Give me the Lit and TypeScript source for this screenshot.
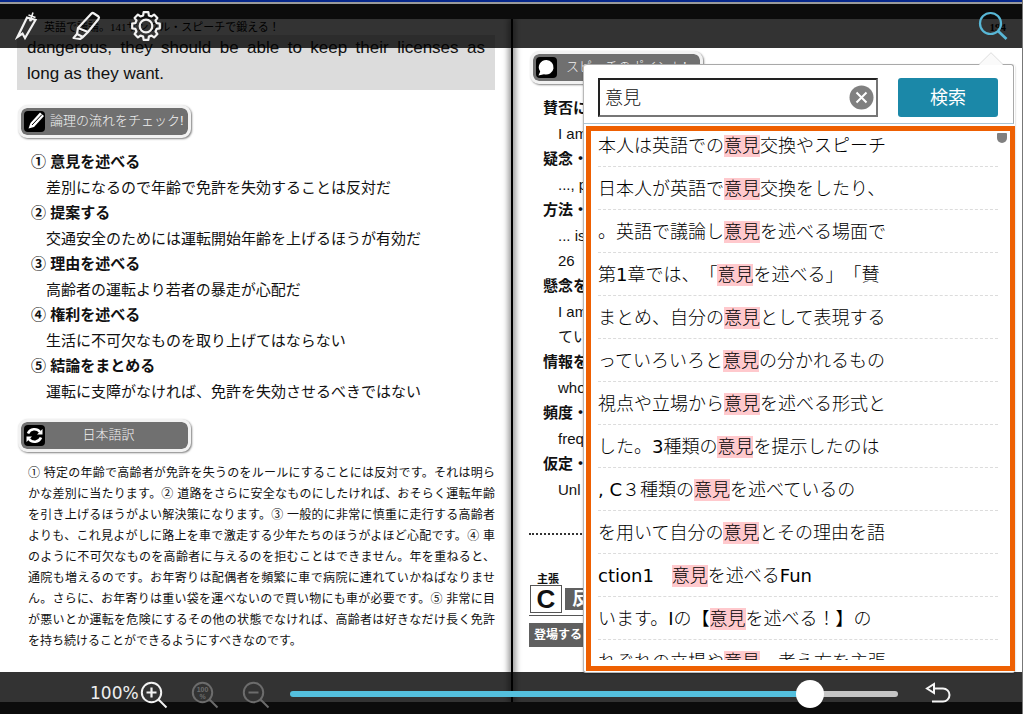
import { LitElement, html, css, svg } from "lit";
import { customElement, state } from "lit/decorators.js";
import { styleMap } from "lit/directives/style-map.js";

type Hit = [before: string, after: string];

const KEYWORD = "意見";

const HITS: Hit[] = [
  ["本人は英語での", "交換やスピーチ"],
  ["日本人が英語で", "交換をしたり、"],
  ["。英語で議論し", "を述べる場面で"],
  ["第1章では、「", "を述べる」「賛"],
  ["まとめ、自分の", "として表現する"],
  ["っていろいろと", "の分かれるもの"],
  ["視点や立場から", "を述べる形式と"],
  ["した。3種類の", "を提示したのは"],
  [", C３種類の", "を述べているの"],
  ["を用いて自分の", "とその理由を語"],
  ["ction1　", "を述べるFun"],
  ["います。Iの【", "を述べる！】の"],
  ["れぞれの立場や", "、考え方を主張"],
];

const FLOW: [string, string][] = [
  ["① 意見を述べる", "差別になるので年齢で免許を失効することは反対だ"],
  ["② 提案する", "交通安全のためには運転開始年齢を上げるほうが有効だ"],
  ["③ 理由を述べる", "高齢者の運転より若者の暴走が心配だ"],
  ["④ 権利を述べる", "生活に不可欠なものを取り上げてはならない"],
  ["⑤ 結論をまとめる", "運転に支障がなければ、免許を失効させるべきではない"],
];

const TRANSLATION = [
  "① 特定の年齢で高齢者が免許を失うのをルールにすることには反対です。それは明ら",
  "かな差別に当たります。② 道路をさらに安全なものにしたければ、おそらく運転年齢",
  "を引き上げるほうがよい解決策になります。③ 一般的に非常に慎重に走行する高齢者",
  "よりも、これ見よがしに路上を車で激走する少年たちのほうがよほど心配です。④ 車",
  "のように不可欠なものを高齢者に与えるのを拒むことはできません。年を重ねると、",
  "通院も増えるのです。お年寄りは配偶者を頻繁に車で病院に連れていかねばなりませ",
  "ん。さらに、お年寄りは重い袋を運べないので買い物にも車が必要です。⑤ 非常に目",
  "が悪いとか運転を危険にするその他の状態でなければ、高齢者は好きなだけ長く免許",
  "を持ち続けることができるようにすべきなのです。",
];

const POINTS: [string, string[]][] = [
  ["賛否に", ["I am"]],
  ["疑念・", ["..., p"]],
  ["方法・", ["... is", "26"]],
  ["懸念を", ["I am", "てい"]],
  ["情報を", ["who"]],
  ["頻度・", ["freq"]],
  ["仮定・", ["Unl"]],
];

const gearPath = (() => {
  const teeth = 8;
  const pts: string[] = [];
  for (let i = 0; i < teeth; i++) {
    const a = (i * 2 * Math.PI) / teeth - Math.PI / 2;
    const steps: [number, number][] = [
      [-0.26, 11], [-0.17, 14], [0.17, 14], [0.26, 11],
    ];
    for (const [d, r] of steps) {
      pts.push(`${(15 + r * Math.cos(a + d)).toFixed(2)} ${(15 + r * Math.sin(a + d)).toFixed(2)}`);
    }
  }
  return `M${pts.join("L")}Z`;
})();

const bookmarkIcon = html`<svg width="26" height="30" viewBox="0 0 26 30" fill="none" stroke="#f2f2f2" stroke-width="2.200">
  <path d="M12 6.500L20.500 9L10 27L7.500 22.500L2.500 26Z" />
  <path d="M18 1.500L15.500 9M13.500 4L20.500 6.500" stroke-width="1.600" />
  <circle cx="15.500" cy="9" r="1.500" fill="#f2f2f2" stroke="none" />
</svg>`;

const penIcon = html`<svg width="30" height="30" viewBox="0 0 30 30" fill="none" stroke="#f2f2f2" stroke-width="2.200" stroke-linejoin="round">
  <path d="M20.500 2.500Q21.500 1.500 23 2.500L27.500 5.500Q28.500 6.500 27.500 8L17 21L7 17Z" />
  <path d="M7 17L6 23L12 26L17 21M6 23L2.500 27L9 28L12 26" />
</svg>`;

const gearIcon = html`<svg width="30" height="30" viewBox="0 0 30 30" fill="none" stroke="#f2f2f2" stroke-width="2.200" stroke-linejoin="round">
  <path d=${gearPath} /><circle cx="15" cy="15" r="6.300" />
</svg>`;

const searchIcon = html`<svg width="30" height="30" viewBox="0 0 30 30" fill="none" stroke="#58b7d6" stroke-width="2.200">
  <circle cx="12.500" cy="12.500" r="10.500" /><path d="M20 20L28.500 28" stroke-width="2.800" />
</svg>`;

const lens = (inner: unknown, color: string) => html`<svg width="28" height="28" viewBox="0 0 28 28" fill="none" stroke=${color} stroke-width="2">
  <circle cx="11.500" cy="11.500" r="9.700" /><path d="M18.500 18.500L26.500 26.500" />${inner}
</svg>`;

const plus = svg`<path d="M6.500 11.500H16.500M11.500 6.500V16.500" stroke-width="2.200" />`;
const minus = svg`<path d="M6.500 11.500H16.500" />`;
const full = svg`<g fill="#6c6c6c" stroke="none" font-family="Liberation Sans, sans-serif" font-weight="700" font-size="7" text-anchor="middle"><text x="11.500" y="11">100</text><text x="11.500" y="18">%</text></g>`;

const backIcon = html`<svg width="26" height="22" viewBox="0 0 26 22" fill="none" stroke="#f5f5f5" stroke-width="2">
  <path d="M9 2V11L2 6.500Z" /><path d="M9 6.500H18A6.500 6.500 0 0 1 18 19.500H7" />
</svg>`;

const pencilMark = html`<svg width="21" height="21" viewBox="0 0 21 21">
  <rect width="21" height="21" rx="4" fill="#000" />
  <path d="M4.500 17.500L6.500 12L16 1.500L20 5L10 16Z" fill="#fff" />
  <path d="M8 14L18 3.500" stroke="#000" stroke-width="1" />
</svg>`;

const cycleMark = html`<svg width="21" height="21" viewBox="0 0 21 21" fill="none" stroke="#fff" stroke-width="2.600">
  <rect width="21" height="21" rx="4" fill="#000" stroke="none" />
  <path d="M4 8.500A7 7 0 0 1 16 7" /><path d="M17 12.500A7 7 0 0 1 5 14" />
  <path d="M18.500 4V9.500H13Z M2.500 17V11.500H8Z" fill="#fff" stroke="none" />
</svg>`;

const balloonMark = html`<svg width="21" height="21" viewBox="0 0 21 21">
  <rect width="21" height="21" rx="4" fill="#000" />
  <path d="M10.500 3A7.500 7.300 0 1 1 8 17.300L2.500 18.500L4.200 14.500A7.500 7.300 0 0 1 10.500 3Z" fill="#fff" />
</svg>`;

/** Wraps Latin letters and digits so that they keep the regular weight beside light kana and kanji. */
const mixed = (text: string) =>
  text.split(/([\x21-\x7e][\x20-\x7e]*)/).filter(Boolean).map((part) =>
    /^[\x21-\x7e]/.test(part) ? html`<span class="latin">${part}</span>` : part);

@customElement("app-root")
export class AppRoot extends LitElement {
  @state() private query = KEYWORD;
  @state() private position = 872;

  static styles = css`
    :host {
      display: flex;
      flex-direction: column;
      height: 100vh;
      box-sizing: border-box;
      border-right: 1px solid #777;
      overflow: hidden;
      background: #3c3c3c;
      color: #111;
      font-family: "Liberation Sans", "Noto Sans CJK JP", sans-serif;
      text-spacing-trim: space-all;
    }
    * { box-sizing: border-box; }
    svg { display: block; flex: none; }
    button { border: 0; padding: 0; background: none; font: inherit; cursor: pointer; }
    ul, ol, p, dl, dd, h2 { margin: 0; padding: 0; list-style: none; font-weight: 400; }

    .strip { flex: none; height: 4px; background: #06278a; border-bottom: 2px solid #9a9a9a; }
    .viewer { position: relative; flex: 1; min-height: 0; padding: 15px 0 12px; }

    .spread { display: grid; grid-template-columns: 511fr 2px 509fr; height: 100%; background: #fff; }
    .gutter { background: #000; box-shadow: 0 0 6px 2px rgba(0, 0, 0, 0.5); clip-path: inset(0 -10px); }
    .page { min-width: 0; overflow: hidden; padding: 0 16px 0 17px; }

    .running { height: 16px; padding-left: 27px; font: 11px/16px "Liberation Serif", "Noto Sans CJK JP", serif; color: #000; }
    .running.right { text-align: right; padding: 0; font-weight: 700; }

    .excerpt { padding: 0 10px 3px; background: #dcdcdc; font-size: 17px; line-height: 26px; }
    .excerpt .spread-line { text-align: justify; text-align-last: justify; white-space: nowrap; }

    .badge {
      display: flex; align-items: center; width: 173px; height: 33px; margin: 15px 0 0 1px; padding-left: 3px;
      border: 3px solid #f2f2f2; border-radius: 9px; background: #707070; background-clip: padding-box;
      box-shadow: 1px 1px 2px rgba(0, 0, 0, 0.5);
      color: #f2f2f2; font-size: 13px; line-height: 20px; font-weight: 300; white-space: nowrap;
    }
    .badge .label { padding: 0 0 1px 5px; }
    .badge .label.middle { flex: 1; padding: 0 16px 1px 0; text-align: center; }
    .badge.speech .label { padding-left: 9px; }

    .outline { font-size: 15px; white-space: nowrap; }
    .outline dt { line-height: 26px; font-weight: 700; }
    .outline dd { padding-left: 15px; line-height: 25px; }
    .flow { margin: 11px 0 0 14px; }

    .translation { margin: 11px 0 0 11px; font-size: 12px; line-height: 21px; font-weight: 500; }
    .translation p { text-align: justify; text-align-last: justify; white-space: nowrap; }
    .translation p:last-child { text-align-last: left; }

    .page .badge.speech { margin: 16px 0 0; }
    .points { margin: 11px 0 0 13px; }
    .rule { margin: 31px 0 0 -1px; border-top: 2px dotted #333; }
    .claim { margin: 38px 0 0 -1px; }
    .claim .caption { padding-left: 8px; font-size: 11px; line-height: 12px; font-weight: 700; }
    .claim .title { display: flex; align-items: center; gap: 3px; padding: 0 0 2px 1px; border-bottom: 1px solid #555; }
    .claim .letter { width: 32px; height: 28px; border: 1px solid #555; font-size: 26px; line-height: 26px; font-weight: 700; text-align: center; }
    .claim .subject { flex: 1; padding-left: 7px; background: #606060; color: #fff; font-size: 18px; line-height: 22px; font-weight: 700; }
    .claim .speaker { margin-top: 7px; padding-left: 5px; background: #606060; color: #fff; font-size: 12px; line-height: 24px; font-weight: 700; }

    .bar { position: absolute; left: 0; right: 0; display: flex; align-items: center; background: rgba(0, 0, 0, 0.8); }
    .bar.top { top: 0; height: 44px; padding: 0 14px 0 15px; gap: 30px; }
    .bar.top .find { margin-left: auto; }
    .bar.bottom { bottom: 0; height: 42px; padding: 0 71px 0 90px; color: #eee; }
    .percent { font-family: "DejaVu Sans", sans-serif; font-size: 17px; width: 50px; }
    .zooms { display: flex; gap: 23px; padding-top: 3px; }
    .seek {
      appearance: none; flex: 1; min-width: 0; height: 28px; margin: 2px 27px 0 20px; background: none;
    }
    .seek::-webkit-slider-runnable-track {
      height: 6px; border-radius: 3px;
      background: linear-gradient(to right, #54c0de var(--fill), #c6c6c6 var(--fill));
    }
    .seek::-webkit-slider-thumb {
      appearance: none; width: 28px; height: 28px; margin-top: -11px; border-radius: 50%; background: #fff;
    }

    .panel {
      position: absolute; top: 60px; right: 7px; bottom: 41px; width: 432px;
      display: flex; flex-direction: column;
      background: #fff; border: 1px solid #b9b9b9; border-width: 0 0 1px 1px; border-radius: 3px;
      box-shadow: 0 1px 2px rgba(0, 0, 0, 0.3);
    }
    .pointer { position: absolute; top: -12px; right: 12px; }
    .query {
      display: flex; gap: 20px; margin-right: 1px; padding: 13px 15px 6px 14px;
      border: 1px solid #a9a9a9; border-width: 1px 1px 1px 0; border-bottom-color: #a9c5d6; border-radius: 3px 3px 0 0;
    }
    .field { position: relative; flex: 1; }
    .field input {
      display: block; width: 100%; height: 39px; margin: 0; padding: 0 36px 4px 5px; outline: 0; border-radius: 0;
      border: 2px solid #767676; border-top-color: #222; border-left-color: #222; background: #fff; color: #111;
      font: 300 18px "DejaVu Sans", "Noto Sans CJK JP", sans-serif;
    }
    .clear { position: absolute; top: 7px; right: 4px; }
    .submit { width: 100px; padding-bottom: 3px; border-radius: 3px; background: #1b88a8; color: #fff; font-size: 18px; }

    .results {
      position: relative; flex: 1; min-height: 0; display: flex; margin: 2px 0 1px 2px; padding: 0 12px 6px 7px;
      border: 5px solid #ee6002;
    }
    .scroll { flex: 1; overflow: hidden; }
    .hits { margin-top: -7px; font: 300 18px/22px "DejaVu Sans", "Noto Sans CJK JP", sans-serif; color: #000; }
    .hits li { padding: 11px 0 9px; border-bottom: 1px dashed #dcdcdc; }
    .hits a { display: block; height: 22px; color: inherit; text-decoration: none; white-space: pre; }
    .hits mark { display: inline-block; height: 22px; background: #ffc9cd; color: inherit; }
    .hits .latin { font-weight: 400; }
    .thumb { position: absolute; top: 2px; right: 3px; width: 10px; height: 10px; border-radius: 1px 1px 5px 5px; background: #808080; }
  `;

  private renderLeft() {
    return html`<section class="page">
      <div class="running">英語で議論。141サンプル・スピーチで鍛える！</div>
      <div class="excerpt">
        <p class="spread-line">dangerous, they should be able to keep their licenses as</p>
        <p>long as they want.</p>
      </div>
      <h2 class="badge">${pencilMark}<span class="label">論理の流れをチェック!</span></h2>
      <dl class="outline flow">${FLOW.map(([t, d]) => html`<dt>${t}</dt><dd>${d}</dd>`)}</dl>
      <h2 class="badge">${cycleMark}<span class="label middle">日本語訳</span></h2>
      <div class="translation">${TRANSLATION.map((l) => html`<p>${l}</p>`)}</div>
    </section>`;
  }

  private renderRight() {
    return html`<section class="page">
      <div class="running right">194</div>
      <h2 class="badge speech">${balloonMark}<span class="label">スピーチのポイント!</span></h2>
      <dl class="outline points">
        ${POINTS.map(([t, ds]) => html`<dt>${t}</dt>${ds.map((d) => html`<dd>${d}</dd>`)}`)}
      </dl>
      <div class="rule"></div>
      <div class="claim">
        <div class="caption">主張</div>
        <div class="title"><span class="letter">C</span><span class="subject">反</span></div>
        <div class="speaker">登場する</div>
      </div>
    </section>`;
  }

  private renderPanel() {
    return html`<div class="panel">
      <svg class="pointer" width="24" height="13" viewBox="0 0 24 13">
        <path d="M0 13L12 0.700L24 13Z" fill="#fafafa" /><path d="M0 12.500L12 0.700L24 12.500" fill="none" stroke="#ddd" />
      </svg>
      <form class="query" @submit=${(e: Event) => e.preventDefault()}>
        <div class="field">
          <input type="text" aria-label="検索語" .value=${this.query}
            @input=${(e: Event) => (this.query = (e.target as HTMLInputElement).value)} />
          <button class="clear" type="button" aria-label="クリア" @click=${() => (this.query = "")}>
            <svg width="25" height="25" viewBox="0 0 25 25">
              <circle cx="12.500" cy="12.500" r="12" fill="#808080" />
              <path d="M7.500 7.500L17.500 17.500M17.500 7.500L7.500 17.500" stroke="#fff" stroke-width="2" />
            </svg>
          </button>
        </div>
        <button class="submit" type="submit">検索</button>
      </form>
      <div class="results">
        <div class="scroll">
          <ul class="hits">
            ${HITS.map(([a, b]) => html`<li><a href="#">${mixed(a)}<mark>${KEYWORD}</mark>${mixed(b)}</a></li>`)}
          </ul>
        </div>
        <span class="thumb"></span>
      </div>
    </div>`;
  }

  render() {
    return html`
      <div class="strip"></div>
      <main class="viewer">
        <div class="spread">${this.renderLeft()}<div class="gutter"></div>${this.renderRight()}</div>
        <nav class="bar top">
          <button aria-label="しおり">${bookmarkIcon}</button>
          <button aria-label="マーカー">${penIcon}</button>
          <button aria-label="設定">${gearIcon}</button>
          <button class="find" aria-label="検索">${searchIcon}</button>
        </nav>
        <div class="bar bottom">
          <span class="percent">100%</span>
          <div class="zooms">
            <button aria-label="拡大">${lens(plus, "#f2f2f2")}</button>
            <button aria-label="等倍">${lens(full, "#6c6c6c")}</button>
            <button aria-label="縮小">${lens(minus, "#6c6c6c")}</button>
          </div>
          <input class="seek" type="range" min="0" max="1000" aria-label="ページ位置" .value=${String(this.position)}
            style=${styleMap({ "--fill": `${this.position / 10}%` })}
            @input=${(e: Event) => (this.position = Number((e.target as HTMLInputElement).value))} />
          <button aria-label="戻る">${backIcon}</button>
        </div>
        ${this.renderPanel()}
      </main>
    `;
  }
}
